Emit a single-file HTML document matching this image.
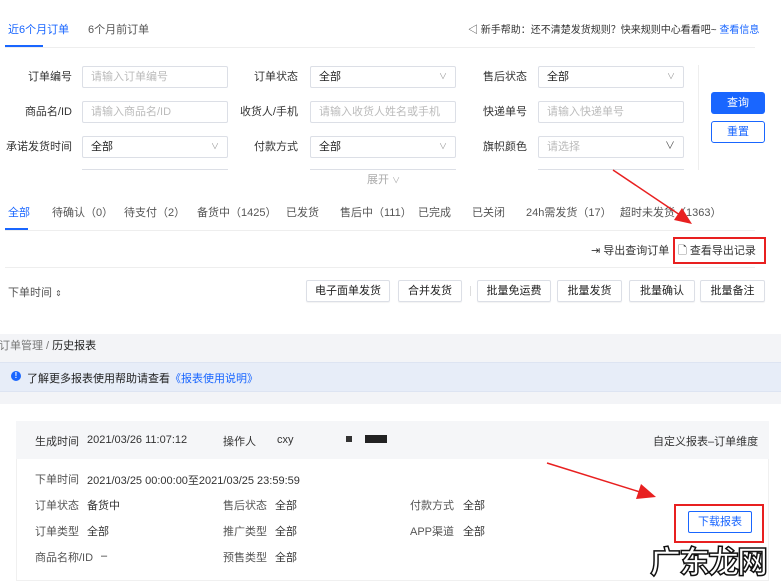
<!DOCTYPE html>
<html><head><meta charset="utf-8"><style>
*{margin:0;padding:0;box-sizing:border-box}
body{width:781px;height:581px;overflow:hidden;background:#fff;font-family:"Liberation Sans","Noto Sans CJK SC",sans-serif;font-size:11px;color:#333;position:relative}
.a{position:absolute;white-space:nowrap}
.lbl{position:absolute;text-align:right;color:#333;line-height:22px}
.in{position:absolute;height:22px;border:1px solid #dcdfe6;border-radius:2px;line-height:20px;padding-left:8px;color:#bbb;width:146px}
.in.v{color:#222}
.in .ch{position:absolute;right:8px;top:0;color:#999;font-size:8px}
.btn{position:absolute;top:280px;height:22px;border:1px solid #dcdfe6;border-radius:2px;line-height:20px;text-align:center;color:#222;box-shadow:0 1px 1px rgba(0,0,0,.05)}
.g{color:#555}
</style></head><body>
<div class="a" style="left:8px;top:21px;color:#1966ff">近6个月订单</div>
<div class="a" style="left:88px;top:21px;color:#555">6个月前订单</div>
<div class="a" style="left:5px;top:45px;width:38px;height:2px;background:#1966ff"></div>
<div class="a" style="left:5px;top:47px;width:750px;height:1px;background:#eee"></div>
<div class="a" style="left:468px;top:21px;color:#333;font-size:10px">◁ 新手帮助：还不清楚发货规则？快来规则中心看看吧~ <span style="color:#1966ff">查看信息</span></div>

<div class="lbl" style="left:0;width:72px;top:66px">订单编号</div>
<div class="in" style="left:82px;top:66px">请输入订单编号</div>
<div class="lbl" style="left:220px;width:78px;top:66px">订单状态</div>
<div class="in v" style="left:310px;top:66px">全部<span class="ch">∨</span></div>
<div class="lbl" style="left:450px;width:77px;top:66px">售后状态</div>
<div class="in v" style="left:538px;top:66px">全部<span class="ch">∨</span></div>

<div class="lbl" style="left:0;width:72px;top:101px">商品名/ID</div>
<div class="in" style="left:82px;top:101px">请输入商品名/ID</div>
<div class="lbl" style="left:220px;width:78px;top:101px">收货人/手机</div>
<div class="in" style="left:310px;top:101px">请输入收货人姓名或手机</div>
<div class="lbl" style="left:450px;width:77px;top:101px">快递单号</div>
<div class="in" style="left:538px;top:101px">请输入快递单号</div>

<div class="lbl" style="left:0;width:72px;top:136px">承诺发货时间</div>
<div class="in v" style="left:82px;top:136px">全部<span class="ch">∨</span></div>
<div class="lbl" style="left:220px;width:78px;top:136px">付款方式</div>
<div class="in v" style="left:310px;top:136px">全部<span class="ch">∨</span></div>
<div class="lbl" style="left:450px;width:77px;top:136px">旗帜颜色</div>
<div class="in" style="left:538px;top:136px">请选择<span class="ch" style="color:#555;font-size:10px">∨</span></div>
<div class="a" style="left:82px;top:169px;width:146px;height:2px;border-top:1px solid #dcdfe6"></div>
<div class="a" style="left:310px;top:169px;width:146px;height:2px;border-top:1px solid #dcdfe6"></div>
<div class="a" style="left:538px;top:169px;width:146px;height:2px;border-top:1px solid #dcdfe6"></div>
<div class="a" style="left:367px;top:171px;color:#aaa">展开 <span style="font-size:8px">∨</span></div>
<div class="a" style="left:698px;top:65px;width:1px;height:105px;background:#eee"></div>
<div class="a" style="left:711px;top:92px;width:54px;height:22px;background:#1966ff;color:#fff;border-radius:3px;text-align:center;line-height:22px">查询</div>
<div class="a" style="left:711px;top:121px;width:54px;height:22px;border:1px solid #1966ff;color:#1966ff;border-radius:3px;text-align:center;line-height:20px">重置</div>

<div class="a g" style="left:8px;top:204px;color:#1966ff">全部</div>
<div class="a g" style="left:52px;top:204px">待确认（0）</div>
<div class="a g" style="left:124px;top:204px">待支付（2）</div>
<div class="a g" style="left:197px;top:204px">备货中（1425）</div>
<div class="a g" style="left:286px;top:204px">已发货</div>
<div class="a g" style="left:340px;top:204px">售后中（111）</div>
<div class="a g" style="left:418px;top:204px">已完成</div>
<div class="a g" style="left:472px;top:204px">已关闭</div>
<div class="a g" style="left:526px;top:204px">24h需发货（17）</div>
<div class="a g" style="left:620px;top:204px">超时未发货（1363）</div>
<div class="a" style="left:5px;top:228px;width:23px;height:2px;background:#1966ff"></div>
<div class="a" style="left:5px;top:230px;width:750px;height:1px;background:#eee"></div>
<div class="a" style="left:591px;top:242px;color:#333">⇥ 导出查询订单</div>
<div class="a" style="left:678px;top:242px;color:#333">🗋 查看导出记录</div>
<div class="a" style="left:673px;top:237px;width:93px;height:27px;border:2px solid #e82020"></div>
<div class="a" style="left:5px;top:267px;width:750px;height:1px;background:#eee"></div>
<div class="a" style="left:8px;top:284px;color:#555">下单时间 <span style="font-size:8px">⇕</span></div>
<div class="btn" style="left:306px;width:84px">电子面单发货</div>
<div class="btn" style="left:398px;width:64px">合并发货</div>
<div class="a" style="left:470px;top:286px;width:1px;height:10px;background:#ddd"></div>
<div class="btn" style="left:477px;width:74px">批量免运费</div>
<div class="btn" style="left:557px;width:65px">批量发货</div>
<div class="btn" style="left:629px;width:66px">批量确认</div>
<div class="btn" style="left:700px;width:65px">批量备注</div>

<div class="a" style="left:0;top:334px;width:781px;height:70px;background:#f3f4f7"></div>
<div class="a" style="left:-1px;top:337px;color:#777">订单管理 / <span style="color:#222">历史报表</span></div>
<div class="a" style="left:0;top:362px;width:781px;height:30px;background:#e7edf8;border-top:1px solid #dde4f2;border-bottom:1px solid #dde4f2"></div>
<div class="a" style="left:11px;top:371px;width:10px;height:10px;border-radius:50%;background:#1966ff;color:#fff;font-size:8px;text-align:center;line-height:10px;font-weight:bold">!</div>
<div class="a" style="left:27px;top:370px;color:#222">了解更多报表使用帮助请查看<span style="color:#1966ff">《报表使用说明》</span></div>

<div class="a" style="left:16px;top:421px;width:753px;height:160px;border:1px solid #f0f0f0"></div>
<div class="a" style="left:16px;top:421px;width:753px;height:38px;background:#f5f6f8"></div>
<div class="a" style="left:35px;top:433px">生成时间</div>
<div class="a" style="left:87px;top:434px">2021/03/26 11:07:12</div>
<div class="a" style="left:223px;top:433px">操作人</div>
<div class="a" style="left:277px;top:434px">cxy</div>
<div class="a" style="left:346px;top:436px;width:6px;height:6px;background:#333"></div>
<div class="a" style="left:365px;top:435px;width:22px;height:8px;background:#222"></div>
<div class="a" style="left:653px;top:433px">自定义报表–订单维度</div>
<div class="a" style="left:35px;top:471px;color:#555">下单时间</div>
<div class="a" style="left:87px;top:472px">2021/03/25 00:00:00至2021/03/25 23:59:59</div>
<div class="a" style="left:35px;top:497px;color:#555">订单状态</div><div class="a" style="left:87px;top:497px">备货中</div>
<div class="a" style="left:223px;top:497px;color:#555">售后状态</div><div class="a" style="left:275px;top:497px">全部</div>
<div class="a" style="left:410px;top:497px;color:#555">付款方式</div><div class="a" style="left:463px;top:497px">全部</div>
<div class="a" style="left:35px;top:523px;color:#555">订单类型</div><div class="a" style="left:87px;top:523px">全部</div>
<div class="a" style="left:223px;top:523px;color:#555">推广类型</div><div class="a" style="left:275px;top:523px">全部</div>
<div class="a" style="left:410px;top:523px;color:#555">APP渠道</div><div class="a" style="left:463px;top:523px">全部</div>
<div class="a" style="left:35px;top:549px;color:#555">商品名称/ID</div><div class="a" style="left:101px;top:550px">–</div>
<div class="a" style="left:223px;top:549px;color:#555">预售类型</div><div class="a" style="left:275px;top:549px">全部</div>
<div class="a" style="left:688px;top:511px;width:64px;height:22px;border:1px solid #1966ff;border-radius:2px;color:#1966ff;text-align:center;line-height:20px">下载报表</div>
<div class="a" style="left:674px;top:504px;width:90px;height:39px;border:2px solid #e82020"></div>
<div class="a" style="left:650px;top:537px;font-size:31px;color:#fff;-webkit-text-stroke:1.5px #111;font-weight:bold;letter-spacing:-2px">广东龙网</div>

<svg class="a" style="left:0;top:0" width="781" height="581">
<line x1="613" y1="170" x2="680" y2="215" stroke="#e82020" stroke-width="1.5"/>
<polygon points="692,224 674,220 682,208" fill="#e82020"/>
<line x1="547" y1="463" x2="640" y2="492" stroke="#e82020" stroke-width="1.5"/>
<polygon points="656,497 636,499 641,484" fill="#e82020"/>
</svg>
</body></html>
